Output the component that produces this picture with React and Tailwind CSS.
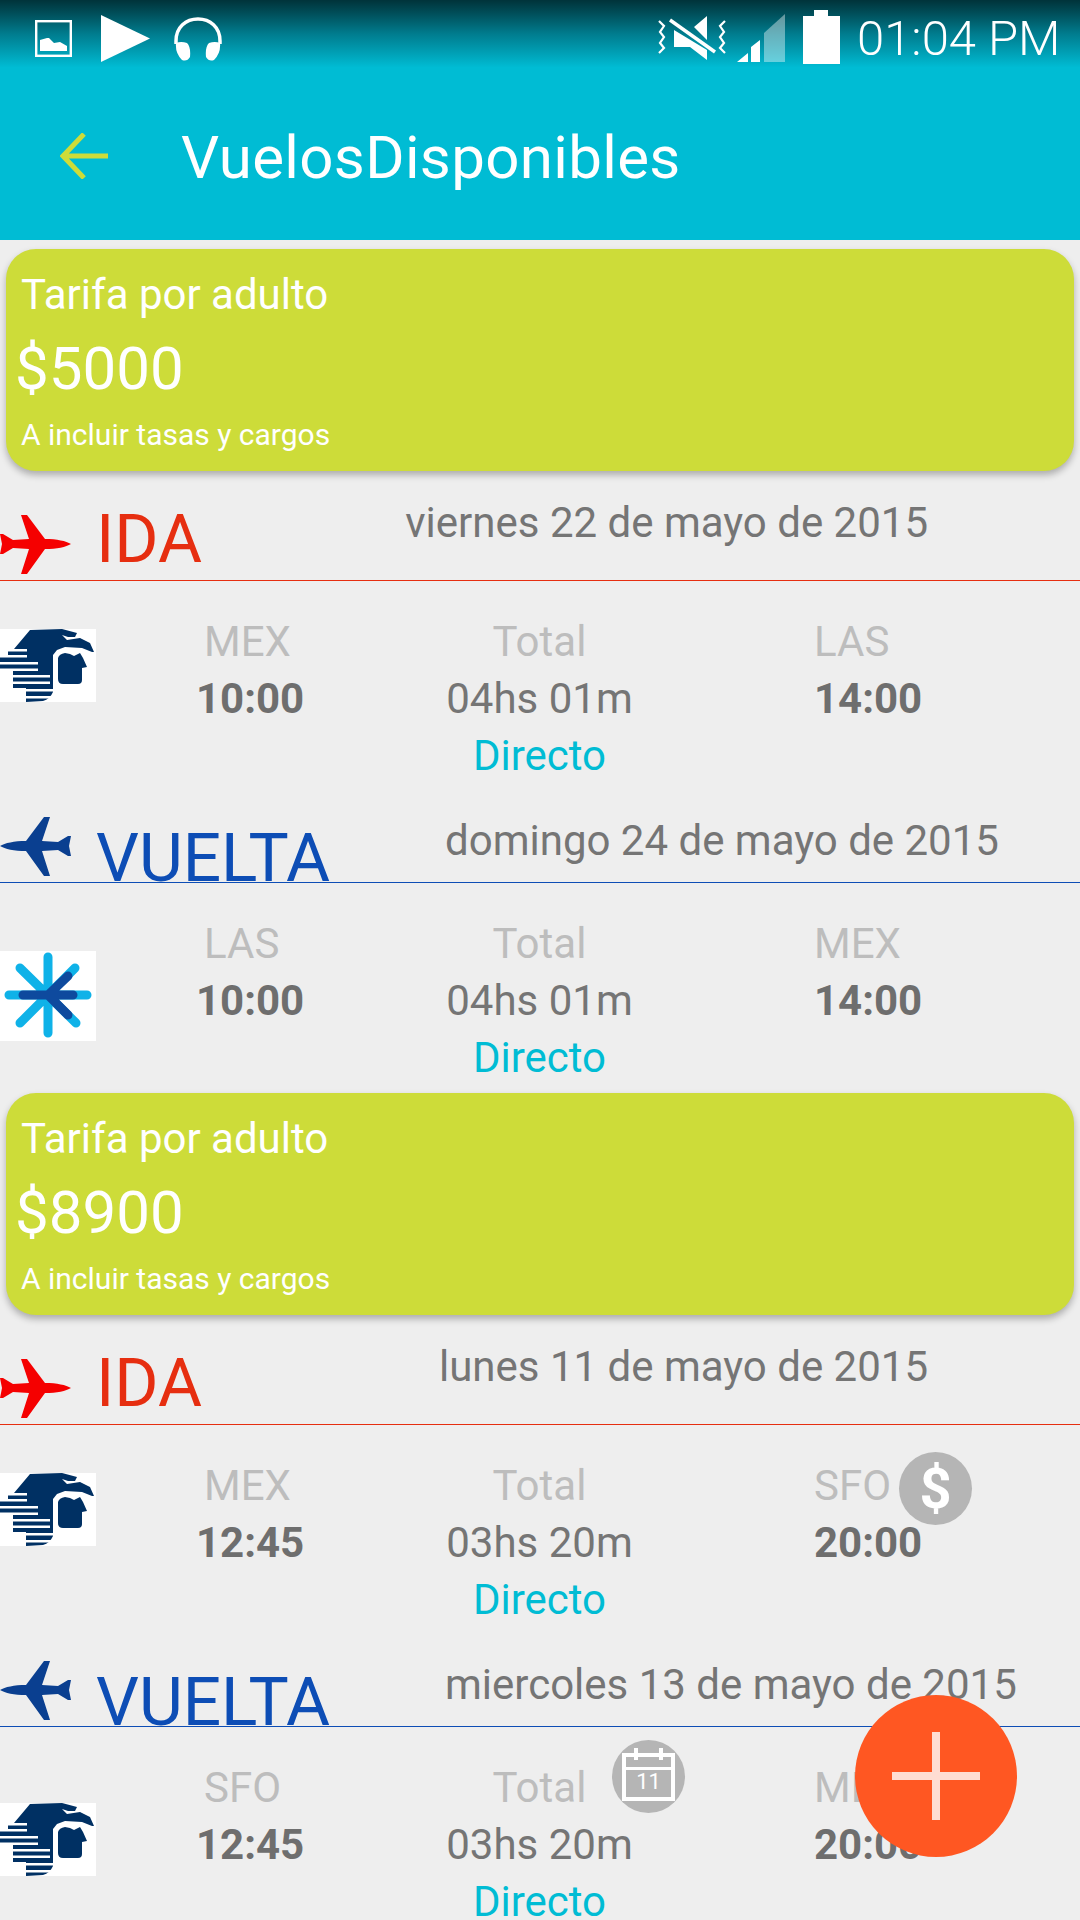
const F = { fontFamily: 'Roboto, sans-serif' };

function Plane({ color, flip }) {
  return (
    <svg width="71" height="60" viewBox="0 0 71 60" className="shrink-0" style={flip ? { transform: 'scaleX(-1)' } : undefined}>
      <path fill={color} d="M71 30C66 27 57 25 45 25L27 1L21 1L29 25L13 26L3 20L0 20L2 30L0 40L3 40L13 34L29 35L21 60L27 60L45 35C57 35 66 33 71 30Z" />
    </svg>
  );
}

function Eagle() {
  const stripes = [[20,2.5,27],[26,2.5,27],[33,2.5,38],[39.5,2.5,38],[46,2.5,50],[52.5,2.5,50],[60,2.5,53],[67,2.5,53]];
  return (
    <svg width="96" height="73" viewBox="0 0 96 73" className="block bg-white">
      <path fill="#003063" d="M30 1L62 0L77 4L75 8L68 8L62 6L67 11L80 9L90 14L94 23L92 23L82 19L65 18L57 21L53 26L53 63Q50 70 43 72L26 73L26 59L13 59L13 42L0 42L0 28L8 28L8 22L14 20Z" />
      {stripes.map(([y, h, w]) => <rect key={y} x="0" y={y} width={w} height={h} fill="#fff" />)}
      <path fill="#003063" d="M58 29Q59 25 65 24L70 25L74 27L80 24L83 29L87 38L82 39L82 51Q82 55 78 55L63 55Q58 55 58 50Z" />
    </svg>
  );
}

function Star() {
  return (
    <svg width="96" height="90" viewBox="0 0 96 90" className="block bg-white">
      <g stroke="#0fb2e8" strokeWidth="9" strokeLinecap="round">
        <path d="M48 6V82M9 44H87M20 17L76 72M75 17L20 72" />
      </g>
      <g stroke="#0e4a9e" strokeWidth="9" strokeLinecap="round">
        <path d="M23 44H73M48 44L68 25M48 44L68 64" />
      </g>
    </svg>
  );
}

function Card({ price }) {
  return (
    <div className="mx-[6px] h-[222px] rounded-[30px] bg-[#cddc39] text-white shadow-[0_4px_7px_rgba(0,0,0,0.28)] flex flex-col">
      <div className="ml-[15px] mt-[22px] text-[42px] leading-[48px]">Tarifa por adulto</div>
      <div className="ml-[9px] mt-[15px] text-[60px] leading-[70px]">{price}</div>
      <div className="ml-[15px] mt-[13px] text-[30px] leading-[36px]">A incluir tasas y cargos</div>
    </div>
  );
}

function Ida({ date }) {
  return (
    <div className="h-[110px] border-b border-[#e62e10] flex items-start overflow-visible">
      <div className="mt-[43px]"><Plane color="#f50000" /></div>
      <div className="ml-[25px] mt-[35px] text-[#e62e10] text-[67.5px] leading-[66px]">IDA</div>
      <div className="ml-auto mr-[152px] mt-[28px] text-[#757575] text-[42px] leading-[48px] whitespace-nowrap">{date}</div>
    </div>
  );
}

function Vuelta({ date }) {
  return (
    <div className="h-[92px] border-b border-[#0d4db5] flex items-start">
      <div className="mt-[25px]"><Plane color="#0a3f90" flip /></div>
      <div className="ml-[25px] mt-[34px] h-[57px] text-[#0d4db5] text-[67.5px] leading-[66px]">VUELTA</div>
      <div className="absolute left-[445px] mt-[26px] text-[#757575] text-[42px] leading-[48px] whitespace-nowrap">{date}</div>
    </div>
  );
}

function Row({ logo, logoTop, from, dep, total, to, arr }) {
  return (
    <div className="h-[210px] grid grid-cols-[196px_244px_199px_175px_1fr] pt-[32px] text-[42px] leading-[57px]">
      <div className="-mt-[32px]" style={{ paddingTop: logoTop }}>{logo}</div>
      <div className="flex flex-col items-start">
        <div className="ml-[8px] text-[#bdbdbd]">{from}</div>
        <div className="font-bold text-[#6e6e6e]">{dep}</div>
      </div>
      <div className="flex flex-col items-center">
        <div className="text-[#bdbdbd]">Total</div>
        <div className="text-[#757575] whitespace-nowrap">{total}</div>
        <div className="text-[#00bcd4]">Directo</div>
      </div>
      <div />
      <div className="flex flex-col items-start">
        <div className="text-[#bdbdbd]">{to}</div>
        <div className="font-bold text-[#6e6e6e]">{arr}</div>
      </div>
    </div>
  );
}

function StatusIcons() {
  return (
    <div className="h-[75px] bg-gradient-to-b from-[#00333a] via-[#007c8e] via-[45%] to-[#00bcd4] to-[90%] flex items-start relative">
      <svg className="ml-[35px] mt-[20px]" width="37" height="37" viewBox="0 0 37 37">
        <rect x="1.2" y="1.2" width="34.6" height="34.6" fill="none" stroke="#fff" strokeWidth="2.4" />
        <path fill="#fff" d="M5 31V20L12 18L14 18L19 23L25 22L32 26V31Z" />
      </svg>
      <svg className="ml-[29px] mt-[15px]" width="49" height="47" viewBox="0 0 49 47"><path fill="#fff" d="M0 0L49 23.5L0 47Z" /></svg>
      <svg className="ml-[23px] mt-[17px]" width="50" height="44" viewBox="0 0 50 44">
        <path fill="none" stroke="#fff" strokeWidth="3.5" d="M3 27V24C3 10 13 2 25 2S47 10 47 24V27" />
        <path fill="#fff" d="M3 26Q8 24 14 26Q18 30 17 40Q14 45 9 43Q2 36 3 26ZM47 26Q42 24 36 26Q32 30 33 40Q36 45 41 43Q48 36 47 26Z" />
      </svg>
      <svg className="ml-[434px] mt-[15px]" width="70" height="46" viewBox="0 0 70 46">
        <path fill="#fff" d="M37 12L50 1V25ZM17 15L50 35V45L33 32H17Z" />
        <path stroke="#fff" strokeWidth="3.5" fill="none" d="M13 5L58 37" />
        <path stroke="#fff" strokeWidth="2.2" fill="none" d="M2 6L7 11L3 17L7 22L3 28L7 33L2 38M68 6L63 11L67 17L63 22L67 28L63 33L68 38" />
      </svg>
      <svg className="ml-[10px] mt-[14px]" width="48" height="48" viewBox="0 0 48 48">
        <path fill="#fff" d="M0 48L11 39V48ZM14 33L23 26V48H14Z" />
        <path fill="#fff" fillOpacity="0.4" d="M27 19L48 0V48H27Z" />
      </svg>
      <svg className="ml-[18px] mt-[10px]" width="37" height="54" viewBox="0 0 37 54">
        <path fill="#fff" d="M11 0H25V6H37V54H0V6H11Z" />
      </svg>
      <div className="ml-[17px] mt-[14px] text-white text-[49px] leading-[50px] font-light whitespace-nowrap">01:04 PM</div>
    </div>
  );
}

export default function App() {
  return (
    <div style={F} className="relative w-[1080px] h-[1920px] overflow-hidden bg-[#eeeeee]">
      <StatusIcons />
      <div className="h-[165px] bg-[#00bcd4] flex items-start">
        <svg className="ml-[60px] mt-[58px]" width="48" height="46" viewBox="0 0 48 46">
          <path fill="none" stroke="#cddc39" strokeWidth="5" d="M48 23H4M24 1L3 23L24 45" />
        </svg>
        <div className="ml-[73px] mt-[48px] text-white text-[60px] tracking-[0.35px] leading-[70px] whitespace-nowrap">VuelosDisponibles</div>
      </div>
      <div className="pt-[9px]">
        <Card price="$5000" />
        <Ida date="viernes 22 de mayo de 2015" />
        <Row logo={<Eagle />} logoTop={48} from="MEX" dep="10:00" total="04hs 01m" to="LAS" arr="14:00" />
        <Vuelta date="domingo 24 de mayo de 2015" />
        <Row logo={<Star />} logoTop={68} from="LAS" dep="10:00" total="04hs 01m" to="MEX" arr="14:00" />
        <Card price="$8900" />
        <Ida date="lunes 11 de mayo de 2015" />
        <Row logo={<Eagle />} logoTop={48} from="MEX" dep="12:45" total="03hs 20m" to="SFO" arr="20:00" />
        <Vuelta date="miercoles 13 de mayo de 2015" />
        <Row logo={<Eagle />} logoTop={76} from="SFO" dep="12:45" total="03hs 20m" to="MEX" arr="20:00" />
      </div>
      <div className="absolute left-[899px] top-[1452px] w-[73px] h-[73px] rounded-full bg-[#b5b5b5] flex items-center justify-center text-white font-bold text-[56px] leading-none">$</div>
      <div className="absolute left-[612px] top-[1740px] w-[73px] h-[73px] rounded-full bg-[#b5b5b5] flex items-center justify-center">
        <div className="relative w-[53px] h-[48px] border-[4px] border-white flex items-end justify-center text-white text-[22px] leading-[30px]">
          <div className="absolute left-0 right-0 top-[10px] h-[3px] bg-white" />
          <div className="absolute left-[8px] -top-[9px] w-[4px] h-[12px] bg-white" />
          <div className="absolute right-[8px] -top-[9px] w-[4px] h-[12px] bg-white" />
          11
        </div>
      </div>
      <div className="absolute left-[855px] top-[1695px] w-[162px] h-[162px] rounded-full bg-[#ff5722] flex items-center justify-center">
        <svg width="88" height="88" viewBox="0 0 88 88"><path fill="#ffddd2" d="M40 0H48V40H88V48H48V88H40V48H0V40H40Z" /></svg>
      </div>
    </div>
  );
}
